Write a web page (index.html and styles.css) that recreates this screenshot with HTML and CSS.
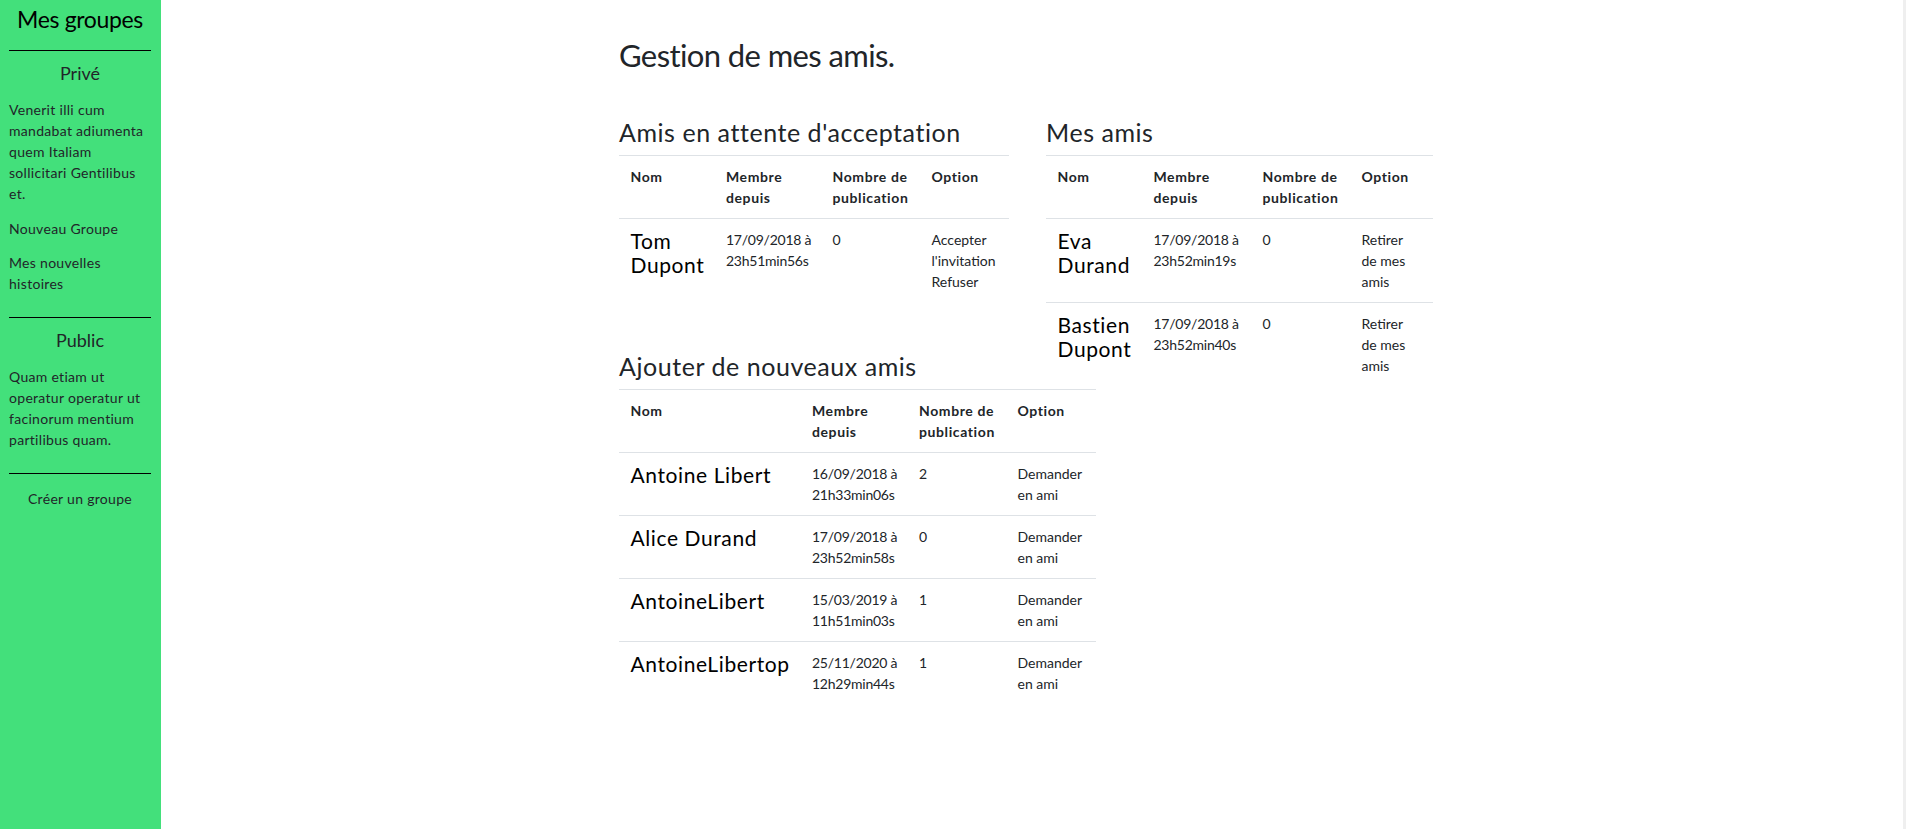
FILE: index.html
```html
<!DOCTYPE html>
<html lang="fr">
<head>
<meta charset="utf-8">
<title>Gestion de mes amis</title>
<link rel="stylesheet" href="styles.css">
</head>
<body>
<div class="page">
  <aside class="sidebar">
    <h3 class="side-title">Mes groupes</h3>
    <hr class="side-rule">
    <h5 class="side-heading">Privé</h5>
    <p class="side-text">Venerit illi cum<br>mandabat adiumenta<br>quem Italiam<br>sollicitari Gentilibus<br>et.</p>
    <p class="side-text">Nouveau Groupe</p>
    <p class="side-text">Mes nouvelles<br>histoires</p>
    <hr class="side-rule side-rule-gap">
    <h5 class="side-heading">Public</h5>
    <p class="side-text">Quam etiam ut<br>operatur operatur ut<br>facinorum mentium<br>partilibus quam.</p>
    <hr class="side-rule side-rule-end">
    <p class="side-link">Créer un groupe</p>
  </aside>

  <main class="main">
    <div class="container">
      <h2 class="page-title">Gestion de mes amis.</h2>
      <div class="cols">
        <div class="col">
          <section class="block block-pending">
            <h4 class="block-title">Amis en attente d'acceptation</h4>
            <table class="table t-pending">
              <colgroup><col class="c1"><col class="c2"><col class="c3"><col class="c4"></colgroup>
              <thead>
                <tr><th>Nom</th><th>Membre depuis</th><th>Nombre de publication</th><th>Option</th></tr>
              </thead>
              <tbody>
                <tr>
                  <td><h5 class="name">Tom Dupont</h5></td>
                  <td class="date"><span class="line">17/09/2018 à</span><span class="line">23h51min56s</span></td>
                  <td>0</td>
                  <td><span class="line">Accepter</span><span class="line">l'invitation</span><span class="line">Refuser</span></td>
                </tr>
              </tbody>
            </table>
          </section>

          <section class="block">
            <h4 class="block-title">Ajouter de nouveaux amis</h4>
            <table class="table t-add">
              <colgroup><col class="c1"><col class="c2"><col class="c3"><col class="c4"></colgroup>
              <thead>
                <tr><th>Nom</th><th>Membre depuis</th><th>Nombre de publication</th><th>Option</th></tr>
              </thead>
              <tbody>
                <tr>
                  <td><h5 class="name">Antoine Libert</h5></td>
                  <td class="date"><span class="line">16/09/2018 à</span><span class="line">21h33min06s</span></td>
                  <td>2</td>
                  <td><span class="line">Demander</span><span class="line">en ami</span></td>
                </tr>
                <tr>
                  <td><h5 class="name">Alice Durand</h5></td>
                  <td class="date"><span class="line">17/09/2018 à</span><span class="line">23h52min58s</span></td>
                  <td>0</td>
                  <td><span class="line">Demander</span><span class="line">en ami</span></td>
                </tr>
                <tr>
                  <td><h5 class="name">AntoineLibert</h5></td>
                  <td class="date"><span class="line">15/03/2019 à</span><span class="line">11h51min03s</span></td>
                  <td>1</td>
                  <td><span class="line">Demander</span><span class="line">en ami</span></td>
                </tr>
                <tr>
                  <td><h5 class="name">AntoineLibertop</h5></td>
                  <td class="date"><span class="line">25/11/2020 à</span><span class="line">12h29min44s</span></td>
                  <td>1</td>
                  <td><span class="line">Demander</span><span class="line">en ami</span></td>
                </tr>
              </tbody>
            </table>
          </section>
        </div>

        <div class="col">
          <section class="block">
            <h4 class="block-title">Mes amis</h4>
            <table class="table t-friends">
              <colgroup><col class="c1"><col class="c2"><col class="c3"><col class="c4"></colgroup>
              <thead>
                <tr><th>Nom</th><th>Membre depuis</th><th>Nombre de publication</th><th>Option</th></tr>
              </thead>
              <tbody>
                <tr>
                  <td><h5 class="name">Eva Durand</h5></td>
                  <td class="date"><span class="line">17/09/2018 à</span><span class="line">23h52min19s</span></td>
                  <td>0</td>
                  <td><span class="line">Retirer</span><span class="line">de mes</span><span class="line">amis</span></td>
                </tr>
                <tr>
                  <td><h5 class="name">Bastien Dupont</h5></td>
                  <td class="date"><span class="line">17/09/2018 à</span><span class="line">23h52min40s</span></td>
                  <td>0</td>
                  <td><span class="line">Retirer</span><span class="line">de mes</span><span class="line">amis</span></td>
                </tr>
              </tbody>
            </table>
          </section>
        </div>
      </div>
    </div>
  </main>
</div>
</body>
</html>
```

FILE: styles.css
```css
* {
  box-sizing: border-box;
}

html,
body {
  margin: 0;
  height: 100%;
}

body {
  background: #efefef;
  font-family: Lato, "Liberation Sans", sans-serif;
  font-size: 14px;
  line-height: 21px;
  color: #212529;
}

.page {
  display: flex;
  min-height: 100vh;
  margin-right: 3px;
  background: #ffffff;
}

/* ---------- Sidebar ---------- */
.sidebar {
  flex: 0 0 161px;
  background: #43e07b;
  padding: 5px 10px 0 9px;
}

.side-title {
  margin: 0 0 16.6px;
  font-size: 23px;
  line-height: 28.8px;
  letter-spacing: -0.35px;
  font-weight: 400;
  color: #000;
  text-align: center;
}

.side-rule {
  margin: 0;
  height: 0;
  border: 0;
  border-top: 1px solid #000;
}

.side-rule-gap {
  margin-top: 22.5px;
}

.side-rule-end {
  margin-top: 23px;
}

.side-heading {
  margin: 12px 0 14.5px;
  font-size: 18px;
  line-height: 21.6px;
  font-weight: 400;
  text-align: center;
  color: #212529;
}

.side-text {
  margin: 0 0 13.5px;
  letter-spacing: 0.3px;
}

.side-link {
  margin: 13.5px 0 0;
  text-align: center;
  letter-spacing: 0.3px;
}

/* ---------- Main ---------- */
.main {
  flex: 1;
}

.container {
  width: 826px;
  margin: 0 auto;
  padding-top: 35.7px;
}

.page-title {
  margin: 0 0 44px;
  font-size: 31px;
  line-height: 38.4px;
  letter-spacing: -0.6px;
  font-weight: 400;
}

.cols {
  display: grid;
  grid-template-columns: 390px 387px;
  column-gap: 37px;
  align-items: start;
}

.block-title {
  margin: 0 0 8px;
  font-size: 25px;
  line-height: 28.8px;
  letter-spacing: 0.55px;
  font-weight: 400;
}

.block-pending {
  margin-bottom: 50px;
}

/* ---------- Tables ---------- */
.table {
  border-collapse: separate;
  border-spacing: 0;
  table-layout: fixed;
}

.table th,
.table td {
  border-top: 1px solid #dee2e6;
  padding: 10px 11px 10px 11.5px;
  vertical-align: top;
  text-align: left;
}

.table th {
  font-weight: 700;
  letter-spacing: 0.6px;
}

.date {
  letter-spacing: -0.25px;
}

.line {
  display: block;
  white-space: nowrap;
}

.name {
  margin: 0;
  font-size: 21px;
  line-height: 24px;
  letter-spacing: 0.6px;
  font-weight: 400;
  color: #000;
}

.t-pending {
  width: 390px;
}
.t-pending .c1 { width: 95.5px; }
.t-pending .c2 { width: 106.5px; }
.t-pending .c3 { width: 99px; }
.t-pending .c4 { width: 89px; }

.t-friends {
  width: 387px;
}
.t-friends .c1 { width: 96px; }
.t-friends .c2 { width: 109px; }
.t-friends .c3 { width: 99px; }
.t-friends .c4 { width: 83px; }

.t-add {
  width: 477px;
}
.t-add .c1 { width: 181.5px; }
.t-add .c2 { width: 107px; }
.t-add .c3 { width: 98.5px; }
.t-add .c4 { width: 90px; }
```
